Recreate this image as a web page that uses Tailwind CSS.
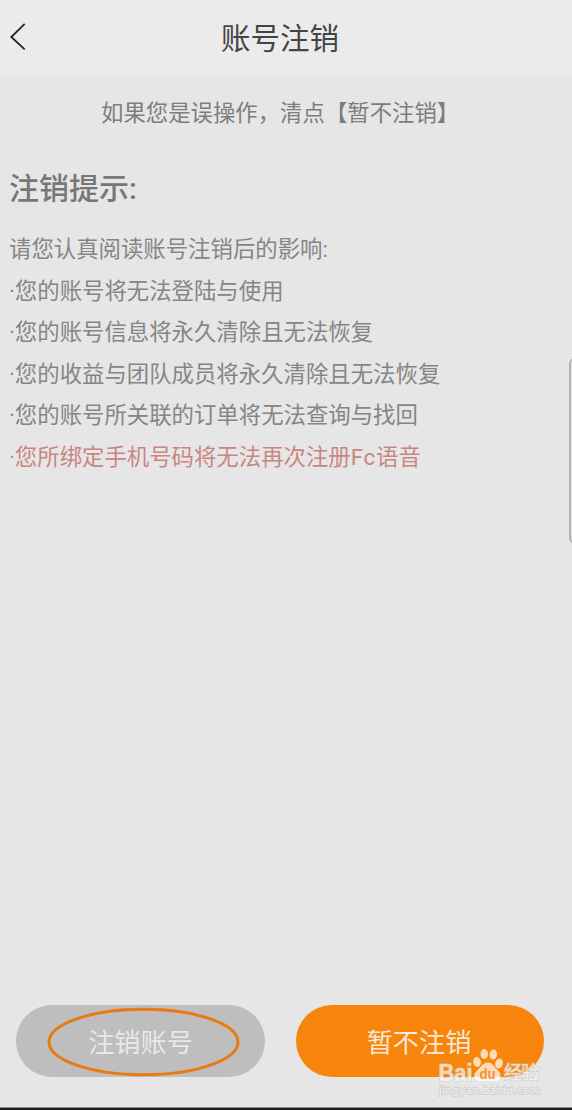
<!DOCTYPE html>
<html lang="zh-CN">
  <head>
    <meta charset="UTF-8" />
    <meta name="viewport" content="width=device-width, initial-scale=1.0" />
    <title>账号注销</title>
    <script src="https://cdn.jsdelivr.net/npm/@tailwindcss/browser@4"></script>
    <style>
      body {
        font-family: Roboto, "Noto Sans CJK SC", sans-serif;
      }
    </style>
  </head>
  <body class="bg-[#e6e6e6]">
    <div
      class="relative flex flex-col w-[572px] h-[1110px] overflow-hidden border-b-2 border-[#1c1c1c]"
    >
      <header
        class="relative flex items-center justify-center h-[76px] shrink-0 bg-[#ebebeb] text-[#444]"
      >
        <button class="absolute left-[10px] top-[22px]" aria-label="返回">
          <svg class="w-4 h-[30px]" viewBox="0 0 16 30" fill="none">
            <path d="M14.7 1.8 1.3 15 14.7 27.3" stroke="#222" stroke-width="1.8" />
          </svg>
        </button>
        <h1 class="text-[29.5px] leading-[76px] pr-3 pt-0.5">账号注销</h1>
      </header>

      <main class="flex-1 px-[9px] text-[22.4px] text-[#858585]">
        <p
          class="pl-[92px] pt-[14px] leading-[42px] text-[#7d7d7d] whitespace-nowrap font-['Noto_Sans_CJK_SC']"
        >
          如果您是误操作，清点【暂不注销】
        </p>
        <h2
          class="mt-[35px] text-[30px] leading-[44px] font-medium text-[#777]"
        >
          注销提示:
        </h2>
        <div class="mt-[18px] leading-[41.6px] whitespace-nowrap">
          <p>请您认真阅读账号注销后的影响:</p>
          <p>·您的账号将无法登陆与使用</p>
          <p>·您的账号信息将永久清除且无法恢复</p>
          <p>·您的收益与团队成员将永久清除且无法恢复</p>
          <p>·您的账号所关联的订单将无法查询与找回</p>
          <p class="text-[#c98681]">
            ·您所绑定手机号码将无法再次注册<span class="tracking-[0.7px]">Fc</span>语音
          </p>
        </div>
      </main>

      <footer
        class="flex gap-[31px] px-4 pb-[31px] text-[26.2px] leading-[72px]"
      >
        <button
          class="relative w-[249px] h-[72px] pt-1 leading-[68px] rounded-full bg-[#bebebe] text-[#e8e8e8]"
        >
          注销账号
          <svg
            class="absolute left-[31px] top-[2px] w-[194px] h-[70px]"
            viewBox="0 0 194 70"
            fill="none"
          >
            <ellipse
              cx="96.5"
              cy="35"
              rx="94.5"
              ry="32.8"
              stroke="#e97a10"
              stroke-width="3"
            />
          </svg>
        </button>
        <button
          class="w-[248px] h-[72px] pt-1 pr-0.5 leading-[68px] rounded-full bg-[#f8850b] text-[#f7e8d6]"
        >
          暂不注销
        </button>
      </footer>

      <!-- edge line above the bottom bar -->
      <div class="h-px shrink-0 -mt-px bg-[#8a8a8a]"></div>

      <!-- edge panel handle -->
      <div
        class="absolute left-[568.5px] top-[358px] w-3 h-[186px] rounded-[6px] border-2 border-[#b3b3b3]"
      ></div>

      <!-- watermark -->
      <svg
        class="absolute left-[430px] top-[1040px] w-[120px] h-[66px]"
        viewBox="0 0 120 66"
      >
        <g
          opacity="0.75"
          fill="#f6f6f6"
          stroke="#c9c4be"
          stroke-width="1.2"
          paint-order="stroke"
        >
          <text
            x="8.5"
            y="40.5"
            font-family="Liberation Sans"
            font-weight="700"
            font-size="23.5"
            textLength="34"
            lengthAdjust="spacingAndGlyphs"
          >Bai</text>
          <text
            x="74"
            y="39"
            font-family="Noto Sans CJK SC"
            font-weight="500"
            font-size="18"
            textLength="35"
          >经验</text>
          <text
            x="9"
            y="53.5"
            font-family="DejaVu Sans"
            font-size="11"
            stroke-width="1.5"
            textLength="101"
            lengthAdjust="spacingAndGlyphs"
          >jingyan.baidu.com</text>
        </g>
        <g fill="#fff" fill-opacity="0.7">
          <ellipse cx="47" cy="22" rx="3.8" ry="5" transform="rotate(-12 47 22)" />
          <ellipse cx="54.3" cy="14" rx="3.8" ry="5" />
          <ellipse cx="63.3" cy="14.5" rx="3.8" ry="5" transform="rotate(10 63.3 14.5)" />
          <ellipse cx="69" cy="23.5" rx="3.8" ry="5" transform="rotate(15 69 23.5)" />
          <path
            d="M58 22.5c4 0 6 3.5 8 6 2.5 2.5 4.5 4 4.5 7.5 0 3-2.5 5-5.5 5H50c-3.5 0-5.8-2-5.8-5 0-3.5 2.5-5 4.8-7.5 2.5-2.8 5-6 9-6z"
          />
        </g>
        <text
          x="49.5"
          y="38.5"
          font-family="Liberation Sans"
          font-weight="700"
          font-size="15"
          fill="#f0923a"
          textLength="16"
          lengthAdjust="spacingAndGlyphs"
        >du</text>
      </svg>
    </div>
  </body>
</html>
